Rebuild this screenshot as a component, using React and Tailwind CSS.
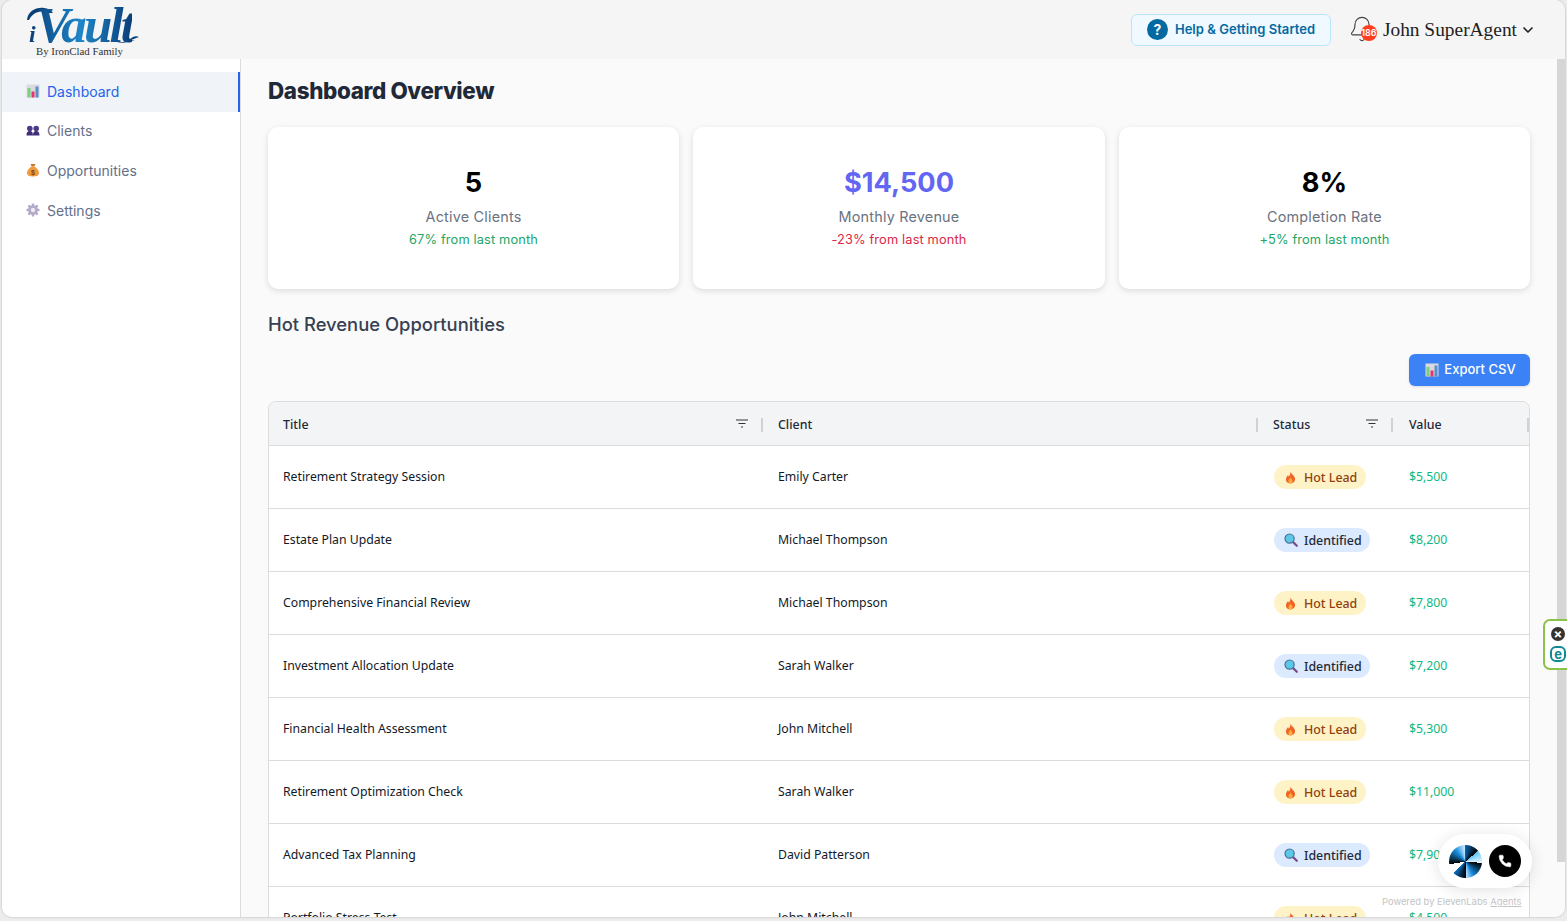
import React from "react";
import { Bell, ChevronDown, Phone } from "lucide-react";

const rows = [
  { title: "Retirement Strategy Session", client: "Emily Carter", status: "hot", value: "$5,500" },
  { title: "Estate Plan Update", client: "Michael Thompson", status: "identified", value: "$8,200" },
  { title: "Comprehensive Financial Review", client: "Michael Thompson", status: "hot", value: "$7,800" },
  { title: "Investment Allocation Update", client: "Sarah Walker", status: "identified", value: "$7,200" },
  { title: "Financial Health Assessment", client: "John Mitchell", status: "hot", value: "$5,300" },
  { title: "Retirement Optimization Check", client: "Sarah Walker", status: "hot", value: "$11,000" },
  { title: "Advanced Tax Planning", client: "David Patterson", status: "identified", value: "$7,900" },
  { title: "Portfolio Stress Test", client: "John Mitchell", status: "hot", value: "$4,500" },
];

const ChartIcon = ({ className }) => (
  <svg viewBox="0 0 14 14" className={className}>
    <rect x="0.5" y="0.5" width="13" height="13" fill="#d9d9de" />
    <rect x="1.5" y="4" width="3" height="9.5" fill="#7ccf7c" />
    <rect x="5.5" y="7.5" width="3" height="6" fill="#e8356f" />
    <rect x="9.5" y="2.5" width="3" height="11" fill="#5a8fc7" />
  </svg>
);

const PeopleIcon = ({ className }) => (
  <svg viewBox="0 0 14 14" className={className}>
    <circle cx="3.8" cy="5.5" r="2.8" fill="#4b3a86" />
    <circle cx="10.2" cy="5.5" r="2.8" fill="#4b3a86" />
    <path d="M0.5 12.5 C0.5 9 2 8 3.8 8 C5.6 8 7 9 7 12.5 C7 9 8.4 8 10.2 8 C12 8 13.5 9 13.5 12.5 Z" fill="#3f2f78" />
  </svg>
);

const BagIcon = ({ className }) => (
  <svg viewBox="0 0 14 14" className={className}>
    <path d="M4.5 1 L9.5 1 L8.3 3.6 L5.7 3.6 Z" fill="#c9782a" />
    <path d="M5.6 3.6 L8.4 3.6 C11.5 5.5 13 8 13 10 C13 12.5 11 13.5 7 13.5 C3 13.5 1 12.5 1 10 C1 8 2.5 5.5 5.6 3.6 Z" fill="#f09a3e" />
    <text x="7" y="11.8" textAnchor="middle" fontSize="7" fontWeight="700" fill="#7a3f10" fontFamily="Liberation Sans, sans-serif">$</text>
  </svg>
);

const GearIcon = ({ className }) => (
  <svg viewBox="0 0 14 14" className={className}>
    <g fill="#b3a9c9">
      <circle cx="7" cy="7" r="4.8" />
      <rect x="5.8" y="0.5" width="2.4" height="13" rx="0.6" />
      <rect x="0.5" y="5.8" width="13" height="2.4" rx="0.6" />
      <rect x="5.8" y="0.5" width="2.4" height="13" rx="0.6" transform="rotate(45 7 7)" />
      <rect x="5.8" y="0.5" width="2.4" height="13" rx="0.6" transform="rotate(-45 7 7)" />
    </g>
    <circle cx="7" cy="7" r="2.2" fill="#eeeaf5" />
  </svg>
);

const FireIcon = () => (
  <svg viewBox="0 0 12 14" className="w-[11px] h-[13px] shrink-0">
    <path d="M6 0.5 C6.5 3 9 4 10.5 6.8 C12 10 9.8 13.5 6 13.5 C2.2 13.5 0 10.5 1.5 7 C2 5.8 2.8 5.2 3.2 4.2 C3.8 5 4 5.6 4.2 6.2 C5.4 4.6 6.2 2.8 6 0.5 Z" fill="#f0642a" />
    <path d="M6 7 C6.4 8.4 8.2 9.2 8.2 11 C8.2 12.4 7.2 13.5 6 13.5 C4.8 13.5 3.8 12.4 3.8 11 C3.8 9.4 5.4 8.6 6 7 Z" fill="#fbb03b" />
  </svg>
);

const SearchIcon = () => (
  <svg viewBox="0 0 14 14" className="w-[14px] h-[14px] shrink-0">
    <path d="M8.6 8.6 L12.8 12.8" stroke="#7b4a8c" strokeWidth="2.2" strokeLinecap="round" />
    <circle cx="5.6" cy="5.6" r="4.6" fill="#5cc8e8" stroke="#4a6f95" strokeWidth="1.2" />
  </svg>
);

const FilterIcon = () => (
  <svg viewBox="0 0 12 9" className="w-3 h-[9px]">
    <path d="M0 1 H12 M2.5 4.5 H9.5 M5 8 H7" stroke="#333" strokeWidth="1.2" />
  </svg>
);

const StatCard = ({ value, label, change, valueClass, changeClass }) => (
  <div className="bg-white rounded-[10px] shadow-[0_2px_6px_rgba(0,0,0,0.12)] h-[162px] flex flex-col items-center pt-[38px]">
    <div className={`text-[27.2px] leading-[35px] font-bold ${valueClass}`}>{value}</div>
    <div className="text-[14.4px] leading-[20px] text-[#6b7280] mt-[7px] tracking-[0.2px]">{label}</div>
    <div className={`text-[12.8px] leading-[18px] mt-[4px] tracking-[0.15px] ${changeClass}`}>{change}</div>
  </div>
);

const NavItem = ({ icon, label, active }) => (
  <div className={`h-10 pb-[2px] flex items-center pl-6 gap-[7px] text-[14px] ${active ? "-mb-[1px] bg-[#f0f4f9] text-[#2563eb] border-r-2 border-[#2563eb]" : "text-[#64708a]"}`}>
    {icon}
    <span>{label}</span>
  </div>
);

const HeaderCell = ({ label, filter, first, last }) => (
  <div className={`flex items-center pt-[2px] pr-0 ${first ? "pl-[14px]" : last ? "pl-4" : "pl-[15px]"}`}>
    <span className="text-[12.4px] font-medium text-[#1f2937] translate-y-[1px]">{label}</span>
    {filter ? <span className="ml-auto mr-[13px] flex -mt-[2px]"><FilterIcon /></span> : <span className="ml-auto" />}
    <span className="w-[2px] h-[14px] bg-[#d1d1d1]" />
  </div>
);

const StatusPill = ({ status }) =>
  status === "hot" ? (
    <span className="inline-flex items-center h-6 w-[92px] pl-[11px] gap-2 rounded-full bg-[#fef3c7] text-[#92400e] text-[12.4px] font-medium">
      <FireIcon />
      <span className="translate-y-[1px]">Hot Lead</span>
    </span>
  ) : (
    <span className="inline-flex items-center h-6 w-[96px] pl-[10px] gap-[6px] rounded-full bg-[#dbeafe] text-[#1f2937] text-[12.4px] font-medium">
      <SearchIcon />
      <span className="translate-y-[1px]">Identified</span>
    </span>
  );

export default function App() {
  return (
    <div className="h-screen w-full overflow-hidden bg-[#ececec] relative font-['Inter',sans-serif]">
      <div className="h-[917px] ml-[2px] mr-[2px] rounded-[10px] overflow-hidden flex flex-col bg-white shadow-[0_0_2px_rgba(0,0,0,0.3)]">
        {/* top bar */}
        <header className="h-[59px] shrink-0 bg-[#f5f5f5] flex items-center pr-[29px]">
          <div className="ml-[24px] w-[120px] h-[59px] relative shrink-0">
            <svg viewBox="0 0 40 24" className="absolute left-0 top-[5px] w-10 h-6">
              <path d="M1 15 C2 6 10 2 18 3 C22 3.5 25 5 27 8 L22 8 C18 5.5 8 5 3 15 Z" fill="#0b3f78" />
            </svg>
            <svg viewBox="0 0 24 10" className="absolute left-[90px] top-[34px] w-6 h-[10px]">
              <path d="M1 8 C6 9 12 7 17 3 C19 2 21 2 23 3 C20 4 18 5 15 6 L19 7 L13 7 C9 9 4 9.5 1 8 Z" fill="#0b3f78" />
            </svg>
            <div className="absolute left-[3px] top-[-4px] font-['Liberation_Serif',serif] italic font-bold text-[51px] leading-[58px] tracking-[-2.8px] text-transparent bg-clip-text bg-gradient-to-r from-[#0b3f78] via-[#1f86c9] to-[#0b3f78] whitespace-nowrap">
              <span className="text-[24px] tracking-[0px]">i</span>Vault
            </div>
            <div className="absolute left-[10px] top-[45px] font-['Liberation_Serif',serif] text-[10.8px] leading-3 text-[#333] whitespace-nowrap">By IronClad Family</div>
          </div>
          <div className="ml-auto flex items-center">
            <div className="h-8 w-[200px] rounded-[6px] border border-[#bae6fd] bg-[#f0f9ff] flex items-center pl-[15px] gap-[7px] text-[#0369a1]">
              <span className="w-[21px] h-[21px] rounded-full bg-[#0369a1] text-white text-[14px] font-bold flex items-center justify-center">?</span>
              <span className="text-[13px] font-semibold tracking-[0.05px]">Help &amp; Getting Started</span>
            </div>
            <div className="relative ml-[18px] w-[34px] h-[30px]">
              <Bell className="w-[28px] h-[28px] -ml-[1px] text-[#444]" strokeWidth={1} />
              <span className="absolute left-[12px] top-[10px] w-4 h-4 rounded-full bg-[#ff3d1f] text-white text-[9px] font-semibold flex items-center justify-center">186</span>
            </div>
            <span className="font-['Liberation_Serif',serif] text-[19.4px] text-[#222] whitespace-nowrap">John SuperAgent</span>
            <ChevronDown className="w-4 h-4 ml-[3px] text-[#222]" strokeWidth={2.5} />
          </div>
        </header>

        <div className="flex-1 flex min-h-0">
          {/* sidebar */}
          <aside className="w-[239px] shrink-0 bg-white border-r border-[#dcdcdc] pt-[13px]">
            <NavItem active label="Dashboard" icon={<ChartIcon className="w-[14px] h-[14px]" />} />
            <NavItem label="Clients" icon={<PeopleIcon className="w-[14px] h-[14px]" />} />
            <NavItem label="Opportunities" icon={<BagIcon className="w-[14px] h-[14px]" />} />
            <NavItem label="Settings" icon={<GearIcon className="w-[14px] h-[14px]" />} />
          </aside>

          {/* main content */}
          <main className="flex-1 min-w-0 bg-[#fafafa] overflow-hidden pl-[27px] pr-[27px] pt-[18px]">
            <h1 className="text-[22.4px] leading-[28px] font-extrabold text-[#1f2937] tracking-[-0.35px]">Dashboard Overview</h1>
            <div className="grid grid-cols-3 gap-[14.4px] mt-[22px]">
              <StatCard value="5" label="Active Clients" change="67% from last month" valueClass="text-black" changeClass="text-[#22a565]" />
              <StatCard value="$14,500" label="Monthly Revenue" change="-23% from last month" valueClass="text-[#6366f1]" changeClass="text-[#dc2645]" />
              <StatCard value="8%" label="Completion Rate" change="+5% from last month" valueClass="text-black" changeClass="text-[#22a565]" />
            </div>
            <h2 className="text-[18.4px] leading-[24px] font-medium text-[#374151] mt-[23px]">Hot Revenue Opportunities</h2>
            <div className="flex justify-end mt-[18px]">
              <div className="h-8 w-[121px] pl-[2px] rounded-[6px] bg-[#3b82f6] text-white text-[13px] font-medium flex items-center justify-center gap-[5px] shadow-sm">
                <ChartIcon className="w-[14px] h-[14px]" />
                Export CSV
              </div>
            </div>
            <div className="mt-[15px] rounded-t-[8px] border border-[#dcdcdc] bg-white font-['Noto_Sans',sans-serif]">
              <div className="grid grid-cols-[494px_495px_135px_1fr] h-[44px] bg-[#f3f4f6] rounded-t-[8px] border-b border-[#dcdcdc]">
                <HeaderCell first label="Title" filter />
                <HeaderCell label="Client" />
                <HeaderCell label="Status" filter />
                <HeaderCell last label="Value" />
              </div>
              {rows.map((row) => (
                <div key={row.title} className="grid grid-cols-[494px_495px_135px_1fr] h-[63px] items-center border-b border-[#dcdcdc] text-[12.25px] text-[#111827]">
                  <div className="pl-[14px]">{row.title}</div>
                  <div className="pl-[15px]">{row.client}</div>
                  <div className="pl-4"><StatusPill status={row.status} /></div>
                  <div className="pl-[16px] text-[#10b981]">{row.value}</div>
                </div>
              ))}
            </div>
          </main>
          <div className="w-[8px] shrink-0 bg-[#fafafa]">
            <div className="w-full h-[803px] bg-[#d6d6d6]" />
          </div>
        </div>
      </div>

      {/* browser extension tab */}
      <div className="absolute left-[1543px] top-[619px] w-[30px] h-[51px] bg-white border-2 border-[#8bc34a] rounded-l-[7px] flex flex-col items-start pl-[6px] pt-[6px] gap-[5px]">
        <span className="w-[14px] h-[14px] rounded-full bg-[#333] text-white text-[13px] leading-[14px] font-bold flex items-center justify-center">×</span>
        <span className="w-4 h-4 rounded-[6px] border-2 border-[#0f8a94] text-[#0f8a94] text-[13px] leading-3 font-bold flex items-center justify-center -ml-[1px]">e</span>
      </div>

      {/* voice widget */}
      <div className="absolute left-[1438px] top-[834px] w-[94px] h-[54px] rounded-full bg-white shadow-[0_2px_16px_rgba(0,0,0,0.12)] flex items-center pl-[11px] gap-[7px]">
        <div className="w-[33px] h-[33px] rounded-full bg-[conic-gradient(#0a5fa8_0deg,#000_50deg,#5cc0f5_50deg,#e8f7ff_95deg,#000_95deg,#1586d8_150deg,#bfe8ff_180deg,#000_180deg,#0a6fc0_225deg,#fff_226deg,#fff_260deg,#000_260deg,#1a90e0_320deg,#d8f1ff_360deg)]" />
        <div className="w-8 h-8 rounded-full bg-black flex items-center justify-center">
          <Phone className="w-[14px] h-[14px] text-white" fill="white" strokeWidth={1} />
        </div>
      </div>
      <div className="absolute left-[1382px] top-[896px] text-[9.4px] leading-3 text-[#c4c4c4] whitespace-nowrap">
        Powered by ElevenLabs <span className="underline">Agents</span>
      </div>
    </div>
  );
}
